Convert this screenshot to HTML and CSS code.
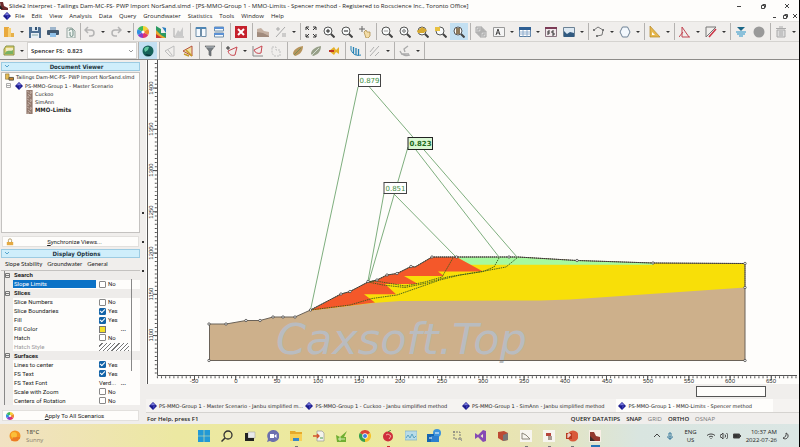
FILE: index.html
```html
<!DOCTYPE html>
<html lang="en">
<head>
<meta charset="utf-8">
<title>Slide2 Interpret</title>
<link rel="stylesheet" href="styles.css">
</head>
<body>
<svg class="sprite" aria-hidden="true">
  <defs>
    <symbol id="gem" viewBox="0 0 10 10"><path d="M5 0l5 5-5 5-5-5z" fill="#1c1c8c"/><path d="M5 1l3 3H2z" fill="#7c7ce0"/><path d="M5 5l3 0-3 4z" fill="#3838b8"/></symbol>
    <symbol id="folder" viewBox="0 0 12 12"><path d="M1 1h5v10H1z" fill="#e9a93c"/><path d="M5 2h3v9H5z" fill="#f7cf75"/><path d="M8 7h3v4H8z" fill="#e6b04a"/></symbol>
    <symbol id="save" viewBox="0 0 12 12"><path d="M0 1h11l1 1v10H0z" fill="#4e6f92"/><path d="M3 1h6v4H3z" fill="#dfe9f2"/><path d="M6 1h2v3H6z" fill="#34506e"/><path d="M2 7h8v5H2z" fill="#e8eef4"/><path d="M3 9h6" stroke="#8aa" /></symbol>
    <symbol id="print" viewBox="0 0 12 12"><path d="M3 1h6v3H3z" fill="#9fb6cc"/><rect y="4" width="12" height="5" rx="1" fill="#41586f"/><path d="M3 7h6v4H3z" fill="#8fc0e8"/></symbol>
    <symbol id="copy" viewBox="0 0 12 12"><path d="M2 2h5l3 3v7H2z" fill="#eef3f0" stroke="#97a5a0"/><path d="M4 5a2 2 0 0 1 4 0v4a1.500 1.500 0 0 1-3 0V6" fill="none" stroke="#6d8a80"/></symbol>
    <symbol id="undo" viewBox="0 0 12 12"><path d="M2 4h5a3 3 0 0 1 0 6H5M4 1L1 4l3 3" fill="none" stroke="#b4b4b4" stroke-width="1.500"/></symbol>
    <symbol id="redo" viewBox="0 0 12 12"><path d="M10 4H5a3 3 0 0 0 0 6h2M8 1l3 3-3 3" fill="none" stroke="#b4b4b4" stroke-width="1.500"/></symbol>
    <symbol id="wheel" viewBox="0 0 12 12"><path d="M6 6V0a6 6 0 0 1 5.200 3z" fill="#f2d335"/><path d="M6 6l5.200-3a6 6 0 0 1 0 6z" fill="#f08a2c"/><path d="M6 6l5.200 3A6 6 0 0 1 6 12z" fill="#e2356b"/><path d="M6 6v6A6 6 0 0 1 .8 9z" fill="#8a3cc8"/><path d="M6 6L.8 9a6 6 0 0 1 0-6z" fill="#2f8fe0"/><path d="M6 6L.8 3A6 6 0 0 1 6 0z" fill="#3fb85a"/><circle cx="6" cy="6" r="1.500" fill="#fff"/></symbol>
    <symbol id="contour" viewBox="0 0 12 12"><path d="M1 0l5 3v4h5v5H1z" fill="#2c9a62"/><path d="M1 4l5 5 5 3H1z" fill="#e8a72e"/><path d="M1 8l6 4H1z" fill="#c33"/><path d="M7 1l4 1v5z" fill="#2b7fc0"/></symbol>
    <symbol id="chartoff" viewBox="0 0 12 12"><path d="M1 2v9h10" fill="none" stroke="#aaa"/><path d="M2 10l3-6 2 2 3-5v9z" fill="#c9c9c9"/></symbol>
    <symbol id="tilev" viewBox="0 0 12 12"><path d="M1 1.500h4.500v9H1zM6.500 1.500H11v9H6.500z" fill="#f5f9fd" stroke="#6f8ea8"/><path d="M1 2h10" stroke="#4f86b4" stroke-width="2"/></symbol>
    <symbol id="tileh" viewBox="0 0 12 12"><path d="M1.500 1h9v4h-9zM1.500 7h9v4h-9z" fill="#f5f9fd" stroke="#6f8ea8"/><path d="M1 2h10M1 8h10" stroke="#5a90d4" stroke-width="2"/></symbol>
    <symbol id="close" viewBox="0 0 12 12"><rect width="12" height="12" fill="#c5202c"/><path d="M3 3l6 6M9 3L3 9" stroke="#fff" stroke-width="2"/></symbol>
    <symbol id="soil" viewBox="0 0 12 12"><path d="M0 3l4-1 3 3 5 1v5H0z" fill="#c4b0a2"/><path d="M0 6l6 1 6 3v1H0z" fill="#a08a7c"/></symbol>
    <symbol id="query" viewBox="0 0 12 12"><path d="M1 11L10 1M1 3h4M3 1v4M7 8h4M7 10h4" stroke="#a9a9a9" fill="none"/></symbol>
    <symbol id="full" viewBox="0 0 12 12"><path d="M1 4V1h3M8 1h3v3M11 8v3H8M4 11H1V8M1 1l3 3M11 1L8 4M11 11L8 8M1 11l3-3" fill="none" stroke="#333"/></symbol>
    <symbol id="lens" viewBox="0 0 12 12"><circle cx="5" cy="5" r="4" fill="#f8fafa" stroke="#555"/><path d="M8 8l3.500 3.500" stroke="#444" stroke-width="2"/></symbol>
    <symbol id="zin" viewBox="0 0 12 12"><use href="#lens"/><path d="M3 5h4M5 3v4" stroke="#222"/></symbol>
    <symbol id="zout" viewBox="0 0 12 12"><use href="#lens"/><path d="M3 5h4" stroke="#222"/></symbol>
    <symbol id="zfit" viewBox="0 0 12 12"><use href="#lens"/><path d="M3 4h4v2H3z" fill="#ccc"/></symbol>
    <symbol id="zdot" viewBox="0 0 12 12"><use href="#lens"/><path d="M5 3v1M5 6v1M3 5h4" stroke="#555"/></symbol>
    <symbol id="zyel" viewBox="0 0 12 12"><use href="#lens"/><path d="M0 5l5-4 5 3-3 3H1z" fill="#d7a92f"/></symbol>
    <symbol id="zbox" viewBox="0 0 12 12"><use href="#lens"/><path d="M0 1h5v4H0z" fill="#e8c03f"/></symbol>
    <symbol id="zdoc" viewBox="0 0 12 12"><use href="#lens"/><path d="M3 2h4v6H3z" fill="#8d7a5c"/></symbol>
    <symbol id="pan" viewBox="0 0 12 12"><path d="M3 0v6M0 3h6" stroke="#666"/><path d="M5 6l2-2 1 2 3 0v4l-2 2H7z" fill="#f3dca6" stroke="#a8853c" stroke-width=".7"/></symbol>
    <symbol id="layers" viewBox="0 0 12 12"><path d="M1 1h6v6H1zM3 3h6v6H3zM5 5h6v6H5z" fill="#d8d8d8" stroke="#a4a4a4"/></symbol>
    <symbol id="text" viewBox="0 0 12 12"><path d="M.5 1.500h11v9H.5z" fill="#f4f4f4" stroke="#999"/><path d="M3 9l2-6 2 6M4 7h2" fill="none" stroke="#444"/></symbol>
    <symbol id="table" viewBox="0 0 12 12"><path d="M.5 1.500h11v9H.5z" fill="#fff" stroke="#5a7da0"/><path d="M0 2.500h12" stroke="#2f5f93" stroke-width="3"/><path d="M0 6h12M0 8h12M4 4v7M8 4v7" stroke="#7ba0c4" stroke-width=".8"/></symbol>
    <symbol id="fs" viewBox="0 0 12 12"><path d="M.5 1.500h11v9H.5z" fill="#f2e9ec" stroke="#8a7480"/><path d="M0 2h12" stroke="#7c3b56" stroke-width="2"/><path d="M3 9V5h2M3 7h2M9 5H7v2h2v2H7" fill="none" stroke="#333"/></symbol>
    <symbol id="image" viewBox="0 0 12 12"><path d="M.5 1.500h11v9H.5z" fill="#dce8f2" stroke="#6c8295"/><path d="M1 5l3 3 3-2 4 1v4H1z" fill="#315a80"/></symbol>
    <symbol id="polyline" viewBox="0 0 12 12"><path d="M1 4l4-3 5 3-1 5-5 1" fill="none" stroke="#777"/><path d="M0 3h2v2H0zM9 3h2v2H9zM3 9h2v2H3z" fill="#777"/></symbol>
    <symbol id="polygon" viewBox="0 0 12 12"><path d="M3.500 1h5L11 6l-2.500 5h-5L1 6z" fill="#f3f8fd" stroke="#6f8296"/></symbol>
    <symbol id="setsquare" viewBox="0 0 12 12"><path d="M1 0l10 11H1z" fill="#e6b84e" stroke="#b68627" stroke-width=".7"/><path d="M3 6l3 3H3z" fill="#fff"/></symbol>
    <symbol id="angle" viewBox="0 0 12 12"><path d="M3 1v10h8M3 1l7 10M0 11l4-5" fill="none" stroke="#c24451"/></symbol>
    <symbol id="dims" viewBox="0 0 12 12"><path d="M1 1h10L1 11z" fill="none" stroke="#777"/><path d="M4 11l7-8" stroke="#c93445" stroke-width="1.500"/></symbol>
    <symbol id="water" viewBox="0 0 12 12"><path d="M2 1h8L6 5z" fill="#1b6788"/><path d="M1 6h10M2 8h8M4 10h4" stroke="#2793c8"/></symbol>
    <symbol id="sphere" viewBox="0 0 12 12"><circle cx="6" cy="6" r="5.500" fill="#999"/></symbol>
    <symbol id="bin" viewBox="0 0 12 12"><path d="M2 4h8v7H2z" fill="#ddd" stroke="#aaa"/><path d="M1 2.500h10M4 1h4M5 5v5M7 5v5" stroke="#aaa"/></symbol>
    <symbol id="openplot" viewBox="0 0 12 12"><path d="M1 4l2-3h8v9H1z" fill="#dccb6b" stroke="#849348"/><path d="M3 3h7v3H3z" fill="#f2ecc4"/><path d="M2 8c3-4 5-1 8-3v4H2z" fill="#78b263"/></symbol>
    <symbol id="globe" viewBox="0 0 12 12"><circle cx="6" cy="6" r="5.500" fill="#176259"/><path d="M2 4a4 4 0 0 1 5-2L6 5 3 7z" fill="#62c7a0"/><path d="M3 9l6 1-1 1a5 5 0 0 1-5-2z" fill="#0b2c38"/></symbol>
    <symbol id="slopeoff" viewBox="0 0 12 12"><path d="M1 6l9-5v10H6zM4 5l4 5" fill="none" stroke="#bdbdbd"/></symbol>
    <symbol id="slope" viewBox="0 0 12 12"><path d="M1 6l9-5v10z" fill="#f0dfa0" stroke="#b5533f"/><path d="M2 9l5 2M4 5l6 6" stroke="#c79b25" stroke-width="1.500"/></symbol>
    <symbol id="filter" viewBox="0 0 12 12"><path d="M1 1h10L7 6v5l-2-1V6z" fill="#767d83" stroke="#555" stroke-width=".6"/><path d="M2 2h8" stroke="#b8bdc2"/></symbol>
    <symbol id="addslip" viewBox="0 0 12 12"><path d="M0 3h4M2 1v4" stroke="#333"/><path d="M2 6l9-4-2 8c-3 1-6 0-7-4z" fill="none" stroke="#c8454f"/></symbol>
    <symbol id="slip" viewBox="0 0 12 12"><path d="M1 1v10h10" fill="none" stroke="#888"/><path d="M2 5l8-4-1 7c-3 1-6 0-7-3z" fill="none" stroke="#c8454f"/></symbol>
    <symbol id="slipoff" viewBox="0 0 12 12"><path d="M2 2h4v3h4v6H4L2 8z" fill="none" stroke="#c0c0c0" stroke-dasharray="2 1"/></symbol>
    <symbol id="leaf" viewBox="0 0 12 12"><path d="M1 9c0-4 4-7 10-8 0 6-4 9-8 10z" fill="#b7945d"/><path d="M2 10l7-7" stroke="#7c8f55"/></symbol>
    <symbol id="leaf2" viewBox="0 0 12 12"><path d="M1 9c0-4 4-7 10-8 0 6-4 9-8 10z" fill="#98a08a"/><path d="M2 10l7-7" stroke="#d5ded0"/></symbol>
    <symbol id="fish" viewBox="0 0 12 12"><path d="M1 6l5-4 2 3 3-3v7L8 7l-2 3z" fill="#e5b02a"/><path d="M1 5h5v2H1z" fill="#bf3526"/></symbol>
    <symbol id="slices" viewBox="0 0 12 12"><path d="M1 1v4c2 5 6 6 10 5" fill="none" stroke="#2683b6"/><path d="M3.500 2v6M6 3v7M8.500 4v6.500" stroke="#2683b6" stroke-width="1.300"/></symbol>
    <symbol id="linesoff" viewBox="0 0 12 12"><path d="M1 11L10 1M1 7l4-5M6 11l4-4" stroke="#b0b0b0" fill="none"/></symbol>
    <symbol id="arcoff" viewBox="0 0 12 12"><path d="M1 6c2 5 7 5 10 4M2 9h8M9 1L5 4l1 3" fill="none" stroke="#aaa" stroke-width="1.300"/></symbol>
    <symbol id="core" viewBox="0 0 7 9"><path d="M0 0h7v9H0z" fill="#937a6e"/><path d="M1 1l2 2M5 1v2M2 5l3 2M1 8h2M4 4l2-1" stroke="#d3c2b8"/></symbol>
    <symbol id="lock" viewBox="0 0 10 10"><path d="M3 5V3a2 2 0 0 1 4 0v2" fill="none" stroke="#a58a52"/><path d="M1 5h8v4H1z" fill="#e4aa43"/></symbol>
  </defs>
</svg>

<div class="app">
  <header class="titlebar">
    <svg class="logo" viewBox="0 0 8 8" aria-hidden="true"><path d="M0 0h3l1 4 4 2v2H1z" fill="#6e2a2a"/><path d="M0 3l3 4H0z" fill="#222"/></svg>
    <h1>Slide2 Interpret - Tailings Dam-MC-FS- PWP Import NorSand.slmd - [PS-MMO-Group 1 - MMO-Limits - Spencer method - Registered to Rocscience Inc., Toronto Office]</h1>
    <div class="winctl">
      <button aria-label="Minimize"><svg viewBox="0 0 6 6"><path d="M1 3.500h4"/></svg></button>
      <button aria-label="Restore"><svg viewBox="0 0 6 6"><path d="M1.500 2.500h3v3h-3zM2.500 1.500h3v3"/></svg></button>
      <button aria-label="Close"><svg viewBox="0 0 6 6"><path d="M1 1l4 4M5 1L1 5"/></svg></button>
    </div>
  </header>

  <nav class="menubar">
    <svg class="gem" aria-hidden="true"><use href="#gem"/></svg>
    <button>File</button><button>Edit</button><button>View</button><button>Analysis</button><button>Data</button><button>Query</button><button>Groundwater</button><button>Statistics</button><button>Tools</button><button>Window</button><button>Help</button>
    <div class="docctl">
      <button aria-label="Minimize document"><svg viewBox="0 0 6 6"><path d="M1 4.500h3"/></svg></button>
      <button aria-label="Restore document"><svg viewBox="0 0 6 6"><path d="M1.500 2.500h3v3h-3zM2.500 1.500h3v3"/></svg></button>
      <button aria-label="Close document"><svg viewBox="0 0 6 6"><path d="M1 1l4 4M5 1L1 5"/></svg></button>
    </div>
  </nav>

  <div class="toolbar first" role="toolbar" aria-label="Standard">
    <button class="tool" aria-label="Open"><svg><use href="#folder"/></svg></button><button class="more" aria-label="Open options"></button>
    <button class="tool" aria-label="Save"><svg><use href="#save"/></svg></button>
    <button class="tool" aria-label="Print"><svg><use href="#print"/></svg></button>
    <button class="tool" aria-label="Copy"><svg><use href="#copy"/></svg></button>
    <i class="sep tight"></i>
    <button class="tool" aria-label="Undo"><svg><use href="#undo"/></svg></button><button class="more" aria-label="Undo list"></button>
    <button class="tool" aria-label="Redo"><svg><use href="#redo"/></svg></button><button class="more" aria-label="Redo list"></button>
    <i class="sep tight"></i>
    <button class="tool" aria-label="Display options"><svg><use href="#wheel"/></svg></button>
    <button class="tool" aria-label="Contours"><svg><use href="#contour"/></svg></button>
    <button class="tool" aria-label="Chart"><svg><use href="#chartoff"/></svg></button>
    <i class="sep"></i>
    <button class="tool" aria-label="Tile vertically"><svg><use href="#tilev"/></svg></button>
    <button class="tool" aria-label="Tile horizontally"><svg><use href="#tileh"/></svg></button>
    <i class="sep"></i>
    <button class="tool" aria-label="Close view"><svg><use href="#close"/></svg></button>
    <i class="sep"></i>
    <button class="tool" aria-label="Materials"><svg><use href="#soil"/></svg></button>
    <button class="tool" aria-label="Add query"><svg><use href="#query"/></svg></button><button class="more" aria-label="Query options"></button>
    <i class="sep"></i>
    <button class="tool" aria-label="Zoom all"><svg><use href="#full"/></svg></button>
    <button class="tool" aria-label="Zoom in"><svg><use href="#zin"/></svg></button>
    <button class="tool" aria-label="Zoom out"><svg><use href="#zout"/></svg></button>
    <button class="tool" aria-label="Pan"><svg><use href="#pan"/></svg></button>
    <i class="sep"></i>
    <button class="tool" aria-label="Zoom extents"><svg><use href="#zfit"/></svg></button>
    <button class="tool" aria-label="Zoom mouse"><svg><use href="#zdot"/></svg></button>
    <button class="tool" aria-label="Zoom slope"><svg><use href="#zyel"/></svg></button>
    <button class="tool" aria-label="Zoom window"><svg><use href="#zbox"/></svg></button>
    <button class="tool on" aria-label="Zoom surface"><svg><use href="#zdoc"/></svg></button>
    <i class="sep"></i>
    <button class="tool" aria-label="Arrange"><svg><use href="#layers"/></svg></button>
    <button class="tool" aria-label="Text box"><svg><use href="#text"/></svg></button><button class="more" aria-label="Text options"></button>
    <button class="tool" aria-label="Table"><svg><use href="#table"/></svg></button><button class="more" aria-label="Table options"></button>
    <button class="tool" aria-label="Safety factor table"><svg><use href="#fs"/></svg></button>
    <button class="tool" aria-label="Image"><svg><use href="#image"/></svg></button><button class="more" aria-label="Image options"></button>
    <i class="sep"></i>
    <button class="tool" aria-label="Polyline"><svg><use href="#polyline"/></svg></button><button class="more" aria-label="Polyline options"></button>
    <button class="tool" aria-label="Polygon"><svg><use href="#polygon"/></svg></button><button class="more" aria-label="Polygon options"></button>
    <i class="sep"></i>
    <button class="tool" aria-label="Measure"><svg><use href="#setsquare"/></svg></button><button class="more" aria-label="Measure options"></button>
    <i class="sep"></i>
    <button class="tool" aria-label="Angle"><svg><use href="#angle"/></svg></button><button class="more" aria-label="Angle options"></button>
    <button class="tool" aria-label="Dimension"><svg><use href="#dims"/></svg></button><button class="more" aria-label="Dimension options"></button>
    <i class="sep"></i>
    <button class="tool" aria-label="Water table"><svg><use href="#water"/></svg></button>
    <button class="tool" aria-label="Sphere"><svg><use href="#sphere"/></svg></button>
    <i class="sep"></i>
    <button class="tool" aria-label="Delete"><svg><use href="#bin"/></svg></button><button class="more" aria-label="Delete options"></button>
  </div>

  <div class="toolbar second" role="toolbar" aria-label="Analysis">
    <button class="tool" aria-label="Open results"><svg><use href="#openplot"/></svg></button><button class="more" aria-label="Result options"></button>
    <div class="method">
      <select aria-label="Analysis method"><option>Spencer FS: &nbsp;0.823</option></select>
      <svg viewBox="0 0 6 6" aria-hidden="true"><path d="M1 2l2 2 2-2"/></svg>
    </div>
    <i class="sep tight"></i>
    <button class="tool on" aria-label="Global minimum"><svg><use href="#globe"/></svg></button>
    <i class="sep"></i>
    <button class="tool" aria-label="Minimum surfaces"><svg><use href="#slopeoff"/></svg></button>
    <button class="tool" aria-label="All surfaces"><svg><use href="#slope"/></svg></button>
    <i class="sep"></i>
    <button class="tool" aria-label="Filter"><svg><use href="#filter"/></svg></button>
    <i class="sep"></i>
    <button class="tool" aria-label="Add surface"><svg><use href="#addslip"/></svg></button><button class="more" aria-label="Surface options"></button>
    <button class="tool" aria-label="Edit surface"><svg><use href="#slip"/></svg></button>
    <button class="tool" aria-label="Pick surface"><svg><use href="#slipoff"/></svg></button>
    <i class="sep"></i>
    <button class="tool" aria-label="Material view"><svg><use href="#leaf"/></svg></button>
    <button class="tool" aria-label="Strength view"><svg><use href="#leaf2"/></svg></button>
    <button class="tool" aria-label="Loads"><svg><use href="#fish"/></svg></button>
    <i class="sep"></i>
    <button class="tool" aria-label="Show slices"><svg><use href="#slices"/></svg></button>
    <i class="sep tight"></i>
    <button class="tool" aria-label="Line of thrust"><svg><use href="#linesoff"/></svg></button><button class="more" aria-label="Thrust options"></button>
    <i class="sep"></i>
    <button class="tool" aria-label="Arc"><svg><use href="#arcoff"/></svg></button><button class="more" aria-label="Arc options"></button>
    <i class="sep"></i>
  </div>

  <main class="work">
    <aside class="side">
      <h2 class="panel-head"><svg class="chev" viewBox="0 0 6 6"><path d="M1 1l2 2 2-2"/></svg>Document Viewer</h2>
      <ul class="tree">
        <li><svg class="ic" viewBox="0 0 9 9"><path d="M0 1h4v6H0z" fill="#e4bb52" stroke="#776030" stroke-width=".6"/><path d="M4 5h5v3H4z" fill="#c9862f" stroke="#554"/></svg>Tailings Dam-MC-FS- PWP Import NorSand.slmd</li>
        <li class="l1"><svg class="minus" viewBox="0 0 5 5"><path d="M.5.5h4v4h-4zM1 2.500h3"/></svg><svg class="gem"><use href="#gem"/></svg>PS-MMO-Group 1 - Master Scenario</li>
        <li class="l2"><svg class="core"><use href="#core"/></svg>Cuckoo</li>
        <li class="l2"><svg class="core"><use href="#core"/></svg>SimAnn</li>
        <li class="l2 cur"><svg class="core"><use href="#core"/></svg>MMO-Limits</li>
      </ul>
      <button class="wide"><svg><use href="#lock"/></svg><span><u>S</u>ynchronize Views...</span></button>
      <h2 class="panel-head"><svg class="chev" viewBox="0 0 6 6"><path d="M1 1l2 2 2-2"/></svg>Display Options</h2>
      <div class="tabs" role="tablist"><button role="tab" class="active">Slope Stability</button><button role="tab">Groundwater</button><button role="tab">General</button></div>
      <div class="props">
        <div class="row group"><svg class="minus" viewBox="0 0 5 5"><path d="M.5.5h4v4h-4zM1 2.500h3"/></svg>Search</div>
        <div class="row sel"><label for="p1">Slope Limits</label><span><input type="checkbox" id="p1">No</span></div>
        <div class="row group"><svg class="minus" viewBox="0 0 5 5"><path d="M.5.5h4v4h-4zM1 2.500h3"/></svg>Slices</div>
        <div class="row"><label for="p2">Slice Numbers</label><span><input type="checkbox" id="p2">No</span></div>
        <div class="row"><label for="p3">Slice Boundaries</label><span><input type="checkbox" id="p3" checked>Yes</span></div>
        <div class="row"><label for="p4">Fill</label><span><input type="checkbox" id="p4" checked>Yes</span></div>
        <div class="row"><label for="p5">Fill Color</label><span><button class="swatch" id="p5"></button><b>...</b></span></div>
        <div class="row"><label for="p6">Hatch</label><span><input type="checkbox" id="p6">No</span></div>
        <div class="row off"><label for="p7">Hatch Style</label><span><button class="hatch" id="p7" disabled></button></span></div>
        <div class="row group"><svg class="minus" viewBox="0 0 5 5"><path d="M.5.5h4v4h-4zM1 2.500h3"/></svg>Surfaces</div>
        <div class="row"><label for="p8">Lines to center</label><span><input type="checkbox" id="p8" checked>Yes</span></div>
        <div class="row"><label for="p9">FS Text</label><span><input type="checkbox" id="p9" checked>Yes</span></div>
        <div class="row"><label for="p10">FS Text Font</label><span><button class="font" id="p10">Verd...</button><b>...</b></span></div>
        <div class="row"><label for="p11">Scale with Zoom</label><span><input type="checkbox" id="p11">No</span></div>
        <div class="row"><label for="p12">Centers of Rotation</label><span><input type="checkbox" id="p12">No</span></div>
        <i class="thumb"></i>
      </div>
      <button class="wide apply"><svg><use href="#wheel"/></svg><span><u>A</u>pply To All Scenarios</span></button>
    </aside>
    <div class="splitter"><i></i><i></i><i></i></div>

    <section class="doc">
      <svg class="model" viewBox="147 60 651 324" role="img" aria-label="Slope model with slip surfaces">
        <rect x="147" y="60" width="651" height="324" fill="#fefdfb"/>
        <path d="M209 324L226 324 246 320.500 260 320.500 273 317 295 317 310.500 310 341 294 350 291.500 368 282 377 280 387 275 397 273.500 411 266.500 415 267 432 257H518L577 260.500 653 263 745 263.500V360.500H209z" fill="#cdb08b"/>
        <path d="M310.500 310.500L341 294 350 291.500 368 282 377 280 387 275 397 273.500 411 266.500 415 267 432 257H518L577 260.500 653 263 745 263.500V287.500L570 299.500 540 300.500 400 301 373 303z" fill="#f8df08"/>
        <path d="M456 257H518L577 260.500 653 263V264.800H470z" fill="#a6fa9e"/>
        <path d="M310.500 310.500L341 294 350 291.500 368 282 377 280 387 275 397 273.500 411 266.500 415 267 432 257H456.500L483 271.500H438L444 276H404L418 284H385L396 294.300H364L375 302.500z" fill="#f4582a"/>
        <text class="mark" x="276" y="354">Caxsoft.Top</text>
        <path d="M209.500 324L226 324 246 320.500 260 320.500 273 317 295 317 310.500 310 341 294 350 291.500 368 282 377 280 387 275 397 273.500 411 266.500 415 267 432 257H518L577 260.500 653 263 745 263.500V360.500H209.500z" fill="none" stroke="#6a6258"/>
        <path d="M432 257H518L577 260.500 653 263 745 263.500V287M310.500 310L341 294 350 291.500 368 282 377 280 387 275 397 273.500 411 266.500 415 267 432 257" fill="none" stroke="#333" stroke-dasharray="1 1"/>
        <g fill="none" stroke="#3b5a1c" stroke-width=".9" stroke-dasharray="1.500 .8">
          <path d="M310.500 310L350 305 372 298.500 397 295 440 280 460 275 482 271.500 506 267 517 258"/>
          <path d="M368 282L383 285 405 287.500 427 283 447 277 483 271.500 494 267 499 258"/>
          <path d="M368 282L376 281 405 286 425 282 442 277 453 258"/>
        </g>
        <g fill="none" stroke="#6fa56f" stroke-width=".9">
          <path d="M358 87L310.500 310M369 86.500L517 257M408 147L369 281M416 150L499 257M384 193L368 281M394 194L456 257"/>
        </g>
        <g fill="#fff" stroke="#333" stroke-width=".7">
          <circle cx="209" cy="324" r="1.200"/><circle cx="226" cy="324" r="1.200"/><circle cx="246" cy="320.500" r="1.200"/><circle cx="260" cy="320.500" r="1.200"/><circle cx="273" cy="317" r="1.200"/><circle cx="283" cy="317" r="1.200"/><circle cx="295" cy="317" r="1.200"/><circle cx="310.500" cy="310" r="1.200"/><circle cx="341" cy="294" r="1.200"/><circle cx="350" cy="291.500" r="1.200"/><circle cx="368" cy="281.500" r="1.200"/><circle cx="377" cy="280" r="1.200"/><circle cx="387" cy="275" r="1.200"/><circle cx="397" cy="273.500" r="1.200"/><circle cx="411" cy="266.500" r="1.200"/><circle cx="432" cy="257" r="1.200"/><circle cx="456.500" cy="257" r="1.200"/><circle cx="509" cy="257" r="1.200"/><circle cx="577" cy="260.500" r="1.200"/><circle cx="653" cy="263" r="1.200"/><circle cx="745" cy="263.500" r="1.200"/><circle cx="745" cy="287.500" r="1.200"/><circle cx="745" cy="360.500" r="1.200"/><circle cx="209" cy="360.500" r="1.200"/>
        </g>
        <g class="fs">
          <rect x="358.500" y="74.500" width="22" height="12"/><text x="369.500" y="83">0.879</text>
          <rect x="408" y="137.500" width="24.500" height="12" class="min"/><text x="420.500" y="146" class="best">0.823</text>
          <rect x="384" y="182.500" width="22.500" height="11"/><text x="395.500" y="190.500">0.851</text>
        </g>
        <g class="axis">
          <path d="M147.500 60V384M157.500 60V375.500H797"/>
          <path d="M156 377.200H797" stroke-width="2" stroke-dasharray="1 3.120" stroke-dashoffset="-.9"/>
          <path d="M194.500 376V380M235.700 376V380M276.900 376V380M318.100 376V380M359.300 376V380M400.500 376V380M441.700 376V380M482.900 376V380M524.100 376V380M565.300 376V380M606.500 376V380M647.700 376V380M688.900 376V380M730.100 376V380M771.300 376V380"/>
          <path d="M155.800 63V375" stroke-width="2" stroke-dasharray="1 3.125"/>
          <path d="M153 88H157M153 129.250H157M153 170.500H157M153 211.750H157M153 253H157M153 294.250H157M153 335.500H157"/>
        </g>
        <g class="num">
          <text x="194" y="383">-50</text><text x="236" y="383">0</text><text x="277" y="383">50</text><text x="318" y="383">100</text><text x="359" y="383">150</text><text x="400" y="383">200</text><text x="442" y="383">250</text><text x="483" y="383">300</text><text x="524" y="383">350</text><text x="565" y="383">400</text><text x="607" y="383">450</text><text x="648" y="383">500</text><text x="689" y="383">550</text><text x="730" y="383">600</text><text x="771" y="383">650</text>
          <text transform="translate(153 88) rotate(-90)">1400</text><text transform="translate(153 129) rotate(-90)">1350</text><text transform="translate(153 170) rotate(-90)">1300</text><text transform="translate(153 212) rotate(-90)">1250</text><text transform="translate(153 253) rotate(-90)">1200</text><text transform="translate(153 294) rotate(-90)">1150</text><text transform="translate(153 335) rotate(-90)">1100</text>
        </g>
      </svg>
      <div class="overview"><i></i></div>
      <div class="views" role="tablist">
        <button role="tab"><svg class="gem"><use href="#gem"/></svg>PS-MMO-Group 1 - Master Scenario - Janbu simplified m...</button>
        <button role="tab"><svg class="gem"><use href="#gem"/></svg>PS-MMO-Group 1 - Cuckoo - Janbu simplified method</button>
        <button role="tab"><svg class="gem"><use href="#gem"/></svg>PS-MMO-Group 1 - SimAnn - Janbu simplified method</button>
        <button role="tab" class="active"><svg class="gem"><use href="#gem"/></svg>PS-MMO-Group 1 - MMO-Limits - Spencer method</button>
      </div>
      <footer class="status"><span>For Help, press F1</span><div><span>QUERY DATATIPS</span><span>SNAP</span><span class="dim">GRID</span><span>ORTHO</span><span class="dim">OSNAP</span></div></footer>
    </section>
  </main>

  <div class="taskbar">
    <div class="weather">
      <svg viewBox="0 0 12 12"><circle cx="6" cy="6" r="5.500" fill="#f5941f"/><circle cx="5" cy="5" r="3" fill="#fbbf3a"/><path d="M2 10h7M4 8h7" stroke="#e2602a"/></svg>
      <p>18°C<small>Sunny</small></p>
    </div>
    <div class="apps">
      <button aria-label="Start"><svg viewBox="0 0 12 12"><path d="M0 0h5.700v5.700H0zM6.300 0H12v5.700H6.300zM0 6.300h5.700V12H0zM6.300 6.300H12V12H6.300z" fill="#2299d6"/></svg></button>
      <button aria-label="Search"><svg viewBox="0 0 12 12"><circle cx="7" cy="5" r="4" fill="none" stroke="#333" stroke-width="1.300"/><path d="M4 8l-3.500 3.500" stroke="#333" stroke-width="1.500"/></svg></button>
      <button aria-label="Task view"><svg viewBox="0 0 12 12"><path d="M4 2h7v6H4z" fill="#e9e9e9" stroke="#aaa" stroke-width=".6"/><path d="M1 3h3v5h6v3H1z" fill="#222"/></svg></button>
      <button aria-label="Chat"><svg viewBox="0 0 12 12"><path d="M6 0a6 6 0 1 1-3 11L0 12l1-3A6 6 0 0 1 6 0z" fill="#6b6fae"/><path d="M3 4h4v4H3zM7.500 5.500L9.500 4v4l-2-1.500z" fill="#fff"/></svg></button>
      <button aria-label="Files" class="run"><svg viewBox="0 0 12 12"><path d="M0 1h5l1 1h6v9H0z" fill="#e6a92b"/><path d="M0 4h12v7H0z" fill="#f8cf55"/><path d="M3 8h6v3H3z" fill="#3887c8"/></svg></button>
      <button aria-label="Transfer"><svg viewBox="0 0 12 12"><path d="M4 1h5l2 2v8H4z" fill="#f3f3ec" stroke="#999" stroke-width=".7"/><path d="M0 6h6M4 4l2 2-2 2" stroke="#d2532d" fill="none" stroke-width="1.300"/><path d="M7 8h3" stroke="#4a9a56"/></svg></button>
      <button aria-label="Plot"><svg viewBox="0 0 12 12"><path d="M0 5l4 2 7-6-3 6h2v5H1z" fill="#6fae32"/><path d="M2 9h7M4 7v4" stroke="#d8efb5"/></svg></button>
      <button aria-label="Chrome"><svg viewBox="0 0 12 12"><path d="M6 6L.8 3A6 6 0 0 1 11.200 3z" fill="#dc4437"/><path d="M6 6l5.200-3A6 6 0 0 1 6 12z" fill="#f6c12b"/><path d="M6 6v6A6 6 0 0 1 .8 3z" fill="#35a04c"/><circle cx="6" cy="6" r="2.700" fill="#fff"/><circle cx="6" cy="6" r="2" fill="#3f7ee0"/></svg></button>
      <button aria-label="Recorder" class="run red"><svg viewBox="0 0 12 12"><circle cx="6" cy="6.500" r="5" fill="#cf2f3c"/><path d="M6 2l3-2" stroke="#4a8a3a"/><path d="M4 5l2-1 3 2-2 3" stroke="#f5a9a0" fill="none"/></svg></button>
      <button aria-label="Monitor"><svg viewBox="0 0 12 12"><path d="M0 1h12v9H0z" fill="#b8dce8" stroke="#7fb0c4" stroke-width=".7"/><path d="M1 8l2-3 2 3 2-4 2 4 2-2" stroke="#5ba3c0" fill="none"/></svg></button>
      <button aria-label="Team"><svg class="big" viewBox="0 0 14 14"><circle cx="10" cy="4" r="4" fill="#3c93dc"/><path d="M0 5h7v8H0z" fill="#1565b0"/><path d="M4 7h8v6H4z" fill="#2b7fcf"/><path d="M8 4h4M2 9h3" stroke="#fff"/></svg></button>
      <button aria-label="Snip"><svg viewBox="0 0 12 12"><path d="M2 2h7v7M3 1v8h8" fill="none" stroke="#777" stroke-dasharray="2 1"/><path d="M8 8l3 3" stroke="#999"/></svg></button>
      <button aria-label="Studio"><svg viewBox="0 0 12 12"><path d="M9 0l3 1v10l-3 1-5-5-3 2V3l3 2z" fill="#864ab4"/><path d="M9 4v4L6.500 6z" fill="#efe8c8"/></svg></button>
      <button aria-label="Model"><svg viewBox="0 0 12 12"><path d="M1 2l6-1 4 2v7l-5 1-5-3z" fill="#bd4b34"/><path d="M6 5l5-2v7l-5 1z" fill="#777"/></svg></button>
      <button aria-label="Slide" class="run"><svg viewBox="0 0 12 12"><path d="M0 0h12v12H0z" fill="#f7f5ef"/><path d="M2 3l4 2 4 4H2z" fill="none" stroke="#8a8578"/></svg></button>
      <button aria-label="Settle" class="run"><svg viewBox="0 0 12 12"><path d="M0 0h12v12H0z" fill="#f7f5ef"/><path d="M3 3h5v3H3z" fill="#b7453c"/><path d="M5 6h4v4H5z" fill="#a89a92"/></svg></button>
      <button aria-label="Slideshow" class="run"><svg viewBox="0 0 12 12"><circle cx="7" cy="6" r="5.500" fill="#d95a3a"/><path d="M0 3h6v6H0z" fill="#b83a20"/><path d="M2 8V4h2v2H2" fill="none" stroke="#fff"/></svg></button>
      <button aria-label="Slide Interpret" class="run live"><svg viewBox="0 0 12 12"><path d="M0 0h12v12H0z" fill="#f9efe6"/><path d="M1 2h4l2 4 4 1v4H1z" fill="#94372e"/><path d="M1 6l5 5H1z" fill="#3a2a28"/></svg></button>
    </div>
    <div class="tray">
      <svg viewBox="0 0 8 8"><path d="M1 5l3-3 3 3"/></svg>
      <svg viewBox="0 0 8 8"><path d="M3 1h2v4H3zM1.500 4.500a2.500 2 0 0 0 5 0M4 6.500V8" stroke="#3b7a9c"/></svg>
      <p class="lang">ENG<br>US</p>
      <svg viewBox="0 0 8 8"><path d="M0 3.500a6 6 0 0 1 8 0M2 5a3 3 0 0 1 4 0M4 6v1"/></svg>
      <svg viewBox="0 0 8 8"><path d="M0 3h1l2-2v6L1 5H0zM5 2.500a2.500 2.500 0 0 1 0 3M6.500 1a4 4 0 0 1 0 6"/></svg>
      <svg viewBox="0 0 8 8"><path d="M.5 2h6v4h-6z" fill="#333"/><path d="M7.500 3v2M5 3v2" /></svg>
      <p class="clock">10:37 AM<br>2022-07-26</p>
      <svg viewBox="0 0 8 8"><path d="M4 1a3 3 0 1 1-3 5 4 4 0 0 0 3-5z"/></svg>
    </div>
  </div>
</div>
</body>
</html>
```
FILE: styles.css
```css
* { box-sizing: border-box; margin: 0; padding: 0; }

html, body { height: 100%; }

body {
  font: 6px/8px Roboto, "Open Sans", sans-serif;
  color: #222;
  background: #000;
  overflow: hidden;
}

button, select, input { font: inherit; color: inherit; border: 0; background: none; }

svg { display: block; flex: none; }

.sprite { position: absolute; width: 0; height: 0; }

.app {
  display: flex;
  flex-direction: column;
  height: 100vh;
  margin-right: 1px;
  background: #f0eeec;
}

.titlebar, .menubar {
  display: flex;
  align-items: center;
  background: #fefdfb;
  font-family: "Open Sans", sans-serif;
}

.titlebar { height: 11px; }
.titlebar h1 { font-size: 6px; font-weight: 400; flex: 1; white-space: nowrap; }
.logo { width: 8px; height: 8px; margin-right: 1px; }

.winctl, .docctl { display: flex; align-items: center; }
.winctl button { width: 24px; }
.winctl svg, .docctl svg { width: 6px; height: 6px; margin: auto; fill: none; stroke: #444; stroke-width: 1; }
.docctl { margin-left: auto; gap: 2px; }
.docctl button { width: 8px; padding: 0; }

.menubar { height: 10px; padding-left: 3px; gap: 1px; }
.menubar > button { padding: 0 3px; }
.gem { width: 8px; height: 8px; }

.toolbar {
  display: flex;
  align-items: center;
  overflow: hidden;
  flex: none;
}
.toolbar.first { height: 20px; border-top: 1px solid #e2e0dd; }
.toolbar.second { height: 19px; border-top: 1px solid #d5d3d0; border-bottom: 1px solid #8d8b89; }
.tool { flex: none; width: 18px; height: 17px; display: grid; place-items: center; }
.tool svg { width: 12px; height: 12px; }
.tool.on { background: #c3e0f2; }
.more { flex: none; width: 8px; height: 17px; display: grid; place-items: center; }
.more::before { content: ""; border: 2px solid transparent; border-top-color: #333; border-bottom: 0; }
.sep { flex: none; width: 1px; height: 17px; margin: 0 1px 0 2px; background: #b4b2b0; }
.sep.tight { margin: 0; }
.method {
  display: flex;
  align-items: center;
  width: 110px;
  height: 17px;
  margin: 0 1px;
  border: 1px solid #d5d3d0;
  background: #fff;
}
.method select {
  appearance: none;
  flex: 1;
  height: 15px;
  padding: 0 3px;
  font-family: "Open Sans", sans-serif;
  font-weight: 600;
}
.method svg { width: 6px; height: 6px; margin-right: 2px; fill: none; stroke: #999; }

.work { flex: 1; min-height: 0; display: flex; }

.side {
  width: 140px;
  padding: 2px 0 3px 1px;
  display: flex;
  flex-direction: column;
  flex: none;
}

.panel-head {
  position: relative;
  height: 9px;
  border: 1px solid #9ccbe2;
  background: #cfeefb;
  font: 700 6px/7px "DejaVu Sans Condensed", sans-serif;
  text-align: center;
  color: #23343f;
  padding-left: 12px;
}
.chev { position: absolute; left: 2px; top: 1px; width: 6px; height: 6px; fill: none; stroke: #5aa5cc; }

.tree {
  flex: 1;
  margin: 1px 0 2px;
  border: 1px solid #c4c2c0;
  background: #fefdfb;
  list-style: none;
  font: 5px/8px "DejaVu Sans", sans-serif;
}
.tree li { display: flex; align-items: center; gap: 2px; height: 8px; padding-left: 3px; white-space: nowrap; }
.tree .ic { width: 9px; height: 8px; }
.tree .l1 { padding-left: 4px; height: 9px; }
.tree .gem { margin-left: 2px; }
.tree .l2 { padding-left: 24px; }
.tree .cur { font-family: "DejaVu Sans Condensed", sans-serif; font-size: 6px; font-weight: 700; }
.core { width: 7px; height: 8px; }
.minus { width: 5px; height: 5px; fill: none; stroke: #aaa; }

.wide {
  display: flex;
  align-items: center;
  height: 11px;
  margin: 1px 1px 2px;
  padding: 0 3px;
  background: #fefdfb;
  border: 1px solid #e2e0dd;
}
.wide svg { width: 8px; height: 8px; }
.wide span { flex: 1; text-align: center; }
.wide.apply { margin: 5px 1px 0; }

.tabs { display: flex; height: 13px; padding-left: 4px; gap: 5px; align-items: center; border-bottom: 1px solid #c4c2c0; font-family: Lato, sans-serif; }

.props {
  position: relative;
  height: 134px;
  flex: none;
  margin-left: 3px;
  display: grid;
  grid-auto-rows: 1fr;
  border-left: 1px solid #888;
  background: #fefdfb;
}
.row { display: grid; grid-template-columns: 1fr 44px; align-items: center; border-left: 8px solid #eeecea; overflow: hidden; min-height: 0; }
.row label { padding-left: 1px; line-height: 8px; }
.row span { display: flex; align-items: center; gap: 2px; padding-left: 3px; }
.row b { margin-left: auto; padding-right: 14px; }
.row.group { display: flex; gap: 4px; border-left: 0; font-weight: 700; background: #eeecea; }
.group .minus { stroke: #777; }
.sel label { background: #0c72c6; color: #fff; }
.off { color: #999; }
.row input {
  appearance: none;
  width: 7px;
  height: 7px;
  border: 1px solid #888;
  border-radius: 1px;
  background: #fff;
}
.row input:checked { background: #1464a8; border-color: #1464a8; }
.row input:checked::before {
  content: "";
  display: block;
  width: 4px;
  height: 2px;
  border: solid #fff;
  border-width: 0 0 1px 1px;
  transform: rotate(-45deg);
}
.swatch { width: 7px; height: 7px; background: #f4e02a; border: 1px solid #777; }
.hatch { width: 30px; height: 8px; background: repeating-linear-gradient(135deg, #fff 0 2px, #777 2px 3px); }
.thumb { position: absolute; right: 8px; top: 8px; width: 1px; height: 92px; background: #888; }

.splitter { width: 6px; flex: none; display: flex; flex-direction: column; justify-content: center; align-items: center; gap: 27px; }
.splitter i { width: 2px; height: 2px; background: #333; }

.doc { flex: 1; min-width: 0; display: flex; flex-direction: column; }
.model { width: 100%; flex: 1; min-height: 0; background: #fefdfb; }
.mark { font: italic 43px "DejaVu Sans", sans-serif; fill: #b9bcc0; }
.fs { font: 7px "DejaVu Sans", sans-serif; text-anchor: middle; }
.fs rect { fill: #fff; stroke: #444; }
.fs .min { fill: #d9f7d3; stroke: #222; }
.fs text { fill: #3f8f3f; }
.fs .best { font-weight: 700; fill: #1c6b1c; }
.axis { fill: none; stroke: #555; stroke-width: 1; }
.num { font: 6px "Liberation Sans", sans-serif; text-anchor: middle; fill: #333; }

.overview { height: 15px; display: flex; justify-content: flex-end; align-items: center; padding-right: 33px; }
.overview i { width: 70px; height: 11px; border: 1px solid #555; background: #fefdfb; }

.views { display: flex; height: 14px; padding-left: 1px; background: #f5f3f1; border-bottom: 1px solid #d5d3d0; font: 5px/8px "DejaVu Sans", sans-serif; }
.views button { flex: 0 0 24%; display: flex; align-items: center; gap: 2px; padding-left: 2px; white-space: nowrap; }
.views .active { background: #fefdfb; }

.status { height: 11px; display: flex; justify-content: space-between; align-items: center; font-family: "Open Sans", sans-serif; font-weight: 600; padding: 0 84px 0 1px; }
.status div { display: flex; gap: 6px; }
.status .dim { font-weight: 400; color: #777; }

.taskbar {
  flex: none;
  height: 23px;
  display: grid;
  grid-template-columns: 1fr auto 1fr;
  align-items: center;
  font-family: "Open Sans", sans-serif;
  background: linear-gradient(90deg, #f1e1c2, #ece8a2 22%, #ecea9e 45%, #e8e4b4 65%, #d9e5e0 80%, #dbe6e4);
}
.weather { display: flex; align-items: center; gap: 5px; padding-left: 9px; }
.weather svg { width: 12px; height: 12px; }
.weather small { display: block; font-size: 6px; color: #887f70; }
.apps { display: flex; }
.apps button { position: relative; width: 23px; height: 23px; display: grid; place-items: center; }
.apps svg { width: 12px; height: 12px; }
.apps .big { width: 14px; height: 14px; }
.run::after { content: ""; position: absolute; bottom: 0; left: 10px; width: 3px; height: 1px; background: #777; }
.run.red::after { background: #c33; }
.run.live::after { left: 7px; width: 9px; height: 2px; background: #2474b8; }
.tray { display: flex; align-items: center; justify-content: flex-end; gap: 5px; padding-right: 9px; }
.tray svg { width: 8px; height: 8px; fill: none; stroke: #444; stroke-width: 1; }
.lang { text-align: center; padding: 0 5px; }
.clock { text-align: right; }
```
